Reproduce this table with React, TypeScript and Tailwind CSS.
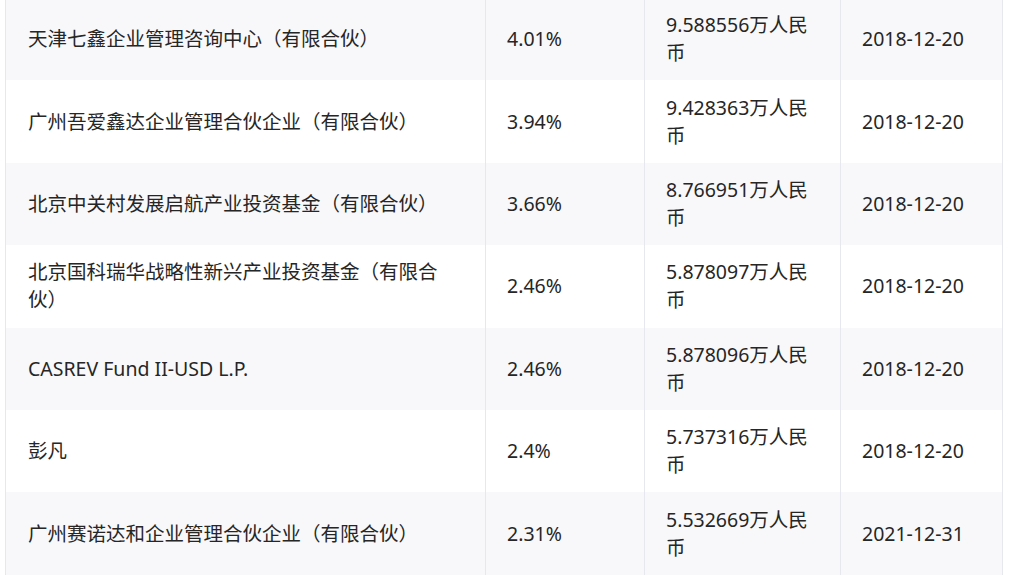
import React from 'react';

interface Row {
  name: string;
  ratio: string;
  amount: string;
  date: string;
}

const rows: Row[] = [
  { name: '天津七鑫企业管理咨询中心（有限合伙）', ratio: '4.01%', amount: '9.588556万人民币', date: '2018-12-20' },
  { name: '广州吾爱鑫达企业管理合伙企业（有限合伙）', ratio: '3.94%', amount: '9.428363万人民币', date: '2018-12-20' },
  { name: '北京中关村发展启航产业投资基金（有限合伙）', ratio: '3.66%', amount: '8.766951万人民币', date: '2018-12-20' },
  { name: '北京国科瑞华战略性新兴产业投资基金（有限合伙）', ratio: '2.46%', amount: '5.878097万人民币', date: '2018-12-20' },
  { name: 'CASREV Fund II-USD L.P.', ratio: '2.46%', amount: '5.878096万人民币', date: '2018-12-20' },
  { name: '彭凡', ratio: '2.4%', amount: '5.737316万人民币', date: '2018-12-20' },
  { name: '广州赛诺达和企业管理合伙企业（有限合伙）', ratio: '2.31%', amount: '5.532669万人民币', date: '2021-12-31' },
];

export default function App() {
  return (
    <div
      className="w-[1009px] h-[577px] overflow-hidden bg-white text-[#262626] text-[19.5px] leading-[28px]"
      style={{ fontFamily: '"Noto Sans", "Noto Sans CJK SC", sans-serif' }}
    >
      <div className="-mt-[2px] ml-[5px] w-[998px] border-x border-[#e6e8f0]">
        {rows.map((row, i) => (
          <div
            key={i}
            className={`flex h-[82.4px] ${i % 2 === 0 ? 'bg-[#f8f8fa]' : 'bg-white'}`}
          >
            <div className="w-[480px] flex items-center pl-[22px] pr-[40px] border-r border-[#e6e8f0]">
              {row.name}
            </div>
            <div className="w-[159px] flex items-center pl-[21px] border-r border-[#e6e8f0]">
              {row.ratio}
            </div>
            <div className="w-[196px] flex items-center pl-[21px] pr-[20px] border-r border-[#e6e8f0]">
              <span className="break-all">{row.amount}</span>
            </div>
            <div className="flex-1 flex items-center pl-[21px]">
              {row.date}
            </div>
          </div>
        ))}
      </div>
    </div>
  );
}
